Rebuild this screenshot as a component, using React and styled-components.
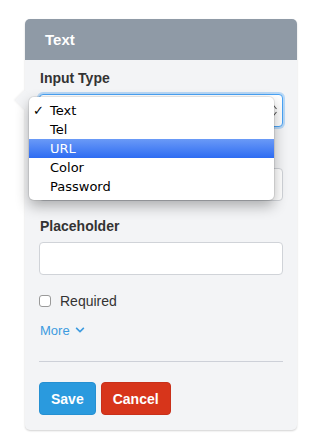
import React from "react";
import styled, { createGlobalStyle } from "styled-components";
import { FaChevronDown } from "react-icons/fa";

const GlobalStyle = createGlobalStyle`
  html, body {
    margin: 0;
    padding: 0;
    background: #ffffff;
    font-family: "Liberation Sans", Arial, sans-serif;
  }
`;

const Page = styled.div`
  width: 312px;
  height: 448px;
  padding: 19px 15px 0 25px;
  box-sizing: border-box;
`;

const Panel = styled.div`
  position: relative;
  width: 272px;
  background: #f3f4f6;
  border-radius: 5px;
  box-shadow: 0 1px 2px rgba(0, 0, 0, 0.18);
`;

const Arrow = styled.div`
  position: absolute;
  left: -7px;
  top: 74px;
  width: 14px;
  height: 14px;
  background: #f3f4f6;
  transform: rotate(45deg);
  box-shadow: -1px 1px 2px rgba(0, 0, 0, 0.06);
`;

const Header = styled.div`
  height: 41px;
  background: #8f9aa6;
  border-radius: 5px 5px 0 0;
  display: flex;
  align-items: center;
  padding: 0 20px;
  color: #ffffff;
  font-size: 15px;
  font-weight: 700;
  position: relative;
`;

const Body = styled.div`
  padding: 8px 14px 15px 14px;
  display: flex;
  flex-direction: column;
  position: relative;
`;

const Field = styled.div`
  display: flex;
  flex-direction: column;
  margin-bottom: 15px;
`;

const Label = styled.div`
  font-size: 14px;
  font-weight: 700;
  color: #333333;
  line-height: 20px;
  min-height: 20px;
  margin: 0 0 6px 1px;
`;

const Input = styled.div`
  height: 33px;
  box-sizing: border-box;
  background: #ffffff;
  border: 1px solid ${(p) => (p.$focus ? "#4aa3f5" : "#d0d3d8")};
  border-radius: 4px;
  box-shadow: ${(p) => (p.$focus ? "0 0 0 2px rgba(74,163,245,0.35)" : "none")};
  position: relative;
`;

const SelectArrows = styled.svg`
  position: absolute;
  right: 5px;
  top: 10px;
`;

const Dropdown = styled.ul`
  position: absolute;
  left: -11px;
  top: 2px;
  width: 245px;
  margin: 0;
  padding: 4px 0;
  list-style: none;
  background: #ffffff;
  border-radius: 5px;
  box-shadow: 0 0 0 1px rgba(0, 0, 0, 0.08), 0 6px 14px rgba(0, 0, 0, 0.3);
  font-family: "DejaVu Sans", "Liberation Sans", sans-serif;
  font-size: 13px;
  z-index: 2;
`;

const Option = styled.li`
  height: 19px;
  line-height: 19px;
  padding-left: 21px;
  position: relative;
  color: ${(p) => (p.$active ? "#ffffff" : "#000000")};
  background: ${(p) =>
    p.$active ? "linear-gradient(#6a9af7, #2e6cf2)" : "transparent"};
`;

const Check = styled.span`
  position: absolute;
  left: 4px;
  top: 0;
`;

const CheckRow = styled.label`
  display: flex;
  align-items: center;
  height: 20px;
  margin: 1px 0 10px 0;
  font-size: 14px;
  color: #333333;
`;

const Box = styled.span`
  width: 12px;
  height: 12px;
  box-sizing: border-box;
  border: 1px solid #9a9a9a;
  border-radius: 3px;
  background: #ffffff;
  margin-right: 9px;
`;

const More = styled.a`
  display: flex;
  align-items: center;
  gap: 5px;
  font-size: 13px;
  color: #3d9be0;
  height: 18px;
  margin-left: 1px;
  text-decoration: none;
`;

const Divider = styled.div`
  height: 1px;
  background: #cdd0d8;
  margin: 22px 0 20px 0;
`;

const Buttons = styled.div`
  display: flex;
  gap: 5px;
`;

const Button = styled.button`
  height: 33px;
  padding: 0 11px;
  border: 1px solid ${(p) => (p.$danger ? "#c8301a" : "#2590d2")};
  border-radius: 4px;
  background: ${(p) => (p.$danger ? "#d7351b" : "#2a9ade")};
  color: #ffffff;
  font-family: "Liberation Sans", Arial, sans-serif;
  font-size: 14px;
  font-weight: 700;
`;

const options = ["Text", "Tel", "URL", "Color", "Password"];

export default function App() {
  return (
    <Page>
      <GlobalStyle />
      <Panel>
        <Arrow />
        <Header>Text</Header>
        <Body>
          <Field>
            <Label>Input Type</Label>
            <Input $focus>
              <SelectArrows width="6" height="11" viewBox="0 0 6 11">
                <path d="M0.5 4 L3 1 L5.5 4 M0.5 7 L3 10 L5.5 7" fill="none" stroke="#555" strokeWidth="1.1" />
              </SelectArrows>
              <Dropdown>
                {options.map((o) => (
                  <Option key={o} $active={o === "URL"}>
                    {o === "Text" && <Check>✓</Check>}
                    {o}
                  </Option>
                ))}
              </Dropdown>
            </Input>
          </Field>
          <Field>
            <Label />
            <Input />
          </Field>
          <Field>
            <Label>Placeholder</Label>
            <Input />
          </Field>
          <CheckRow>
            <Box />
            Required
          </CheckRow>
          <More href="#">
            More <FaChevronDown size={10} />
          </More>
          <Divider />
          <Buttons>
            <Button>Save</Button>
            <Button $danger>Cancel</Button>
          </Buttons>
        </Body>
      </Panel>
    </Page>
  );
}
